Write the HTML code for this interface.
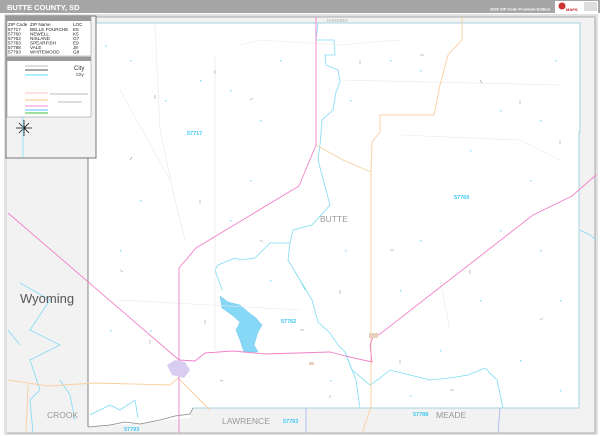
<!DOCTYPE html>
<html><head><meta charset="utf-8"><style>
html,body{margin:0;padding:0;width:600px;height:436px;overflow:hidden;background:#fff;font-family:"Liberation Sans",sans-serif}
svg{display:block}
</style></head><body>
<svg width="600" height="436" viewBox="0 0 600 436" xmlns="http://www.w3.org/2000/svg" font-family="Liberation Sans, sans-serif">
<rect width="600" height="436" fill="#fff"/>
<rect x="0" y="0" width="600" height="13" fill="#a6a6a6"/>
<text x="7" y="10" font-size="7.5" font-weight="bold" fill="#fff">BUTTE COUNTY, SD</text>
<text x="490" y="10.5" font-size="4" fill="#fff" font-weight="bold">2020 ZIP Code Premium Edition</text>
<rect x="555" y="1" width="43" height="12" fill="#fff"/>
<circle cx="562" cy="6" r="3.5" fill="#c33"/>
<text x="566" y="11" font-size="4" fill="#c22" font-weight="bold">MAPS</text>
<rect x="584" y="2" width="13" height="9" fill="#ddd"/>
<rect x="4" y="14" width="594" height="421" fill="#e2e2e2"/>
<rect x="7" y="17" width="588" height="416" fill="#f2f2f2"/>
<line x1="7" y1="17" x2="595" y2="17" stroke="#999" stroke-width="0.8"/>
<line x1="7" y1="433" x2="595" y2="433" stroke="#999" stroke-width="0.8"/>
<line x1="595" y1="17" x2="595" y2="433" stroke="#999" stroke-width="0.8"/>
<path d="M88 23 L580 23 L580 132 L579 132 L579 408 L193 408 L190 418 L170 420 L140 424 L110 425 L88 427 Z" fill="#fff"/>
<path d="M88 23 L88 427" stroke="#666" stroke-width="0.8" fill="none"/>
<path d="M88 23 L580 23 L580 132 L579 132 L579 408 L193 408" stroke="#8cc8d8" stroke-width="0.8" fill="none"/>
<path d="M88 427 L110 425 L125 422 L140 424 L160 420 L175 416 L190 414 L193 408" stroke="#888" stroke-width="0.8" fill="none"/>
<line x1="500" y1="408" x2="498" y2="433" stroke="#9ae" stroke-width="0.7"/>
<line x1="306" y1="408" x2="306" y2="433" stroke="#9ae" stroke-width="0.7"/>
<g stroke="#7fdcf4" stroke-width="0.8" fill="none">
<path d="M318 23 L316 40 L334 40 L335 55 L325 55 L326 65 L338 70 L340 82 L336 92 L333 110 L322 120 L320 145 L318 160 L330 205 L312 225 L293 230 L290 243 L270 243 L255 258 L240 260 L235 258 L218 265 L215 270 L222 290"/>
<path d="M290 243 L288 260 L300 280 L305 290"/>
<path d="M300 280 L312 300 L318 322 L330 333 L338 345 L345 352 L356 380 L360 408"/>
<path d="M345 352 L352 370 L370 385 L380 378 L390 370 L410 375 L430 380 L450 378 L468 375 L485 368 L497 380 L503 408"/>
<path d="M20 283 L50 300 L30 330 L60 345 L30 360 L40 390 L30 400 L33 433"/>
<path d="M580 230 L590 235 L596 240"/>
<path d="M90 415 L110 405 L120 410 L135 400 L138 418"/>
<path d="M60 380 L70 395 L75 420"/>
<path d="M8 330 L20 345"/>
</g>
<path d="M220 296 L228 302 L240 305 L248 312 L256 318 L262 325 L258 332 L254 345 L258 352 L244 352 L240 340 L236 330 L240 322 L232 315 L222 308 Z" fill="#86d8f6" stroke="#6cc8ee" stroke-width="0.5"/>
<g stroke="#e8e8e8" stroke-width="0.6" fill="none">
<path d="M155 25 L160 130 L175 200 L185 240"/><path d="M215 55 L215 350"/><path d="M240 45 L260 40 L340 45 L400 40"/><path d="M120 90 L170 180"/><path d="M400 135 L520 140 L560 160"/><path d="M440 280 L450 330"/><path d="M120 300 L300 310"/><path d="M340 80 L560 85"/>
</g>
<g stroke="#f8cfa0" stroke-width="0.9" fill="none">
<path d="M462 17 L462 40 L448 55 L440 85 L434 115 L380 115 L380 132 L372 142 L371 172 L371 407 L362 433"/>
<path d="M316 145 L343 160 L371 172"/>
<path d="M8 380 L48 386 L95 383 L170 385 L178 378 L192 392 L210 410"/>
<path d="M28 385 L26 432"/>
</g>
<g stroke="#f080c8" stroke-width="0.9" fill="none">
<path d="M316 17 L316 145 L299 186 L196 248 L179 268 L179 433"/>
<path d="M8 213 L179 360"/>
<path d="M179 360 L195 361 L205 353 L233 351 L265 354 L330 352 L345 356 L372 362 L370 345 L373 337 L380 334 L533 215 L572 196 L596 175"/>
</g>
<path d="M167 365 L175 360 L185 362 L190 370 L184 378 L172 375 Z" fill="#d8ccf0"/>
<rect x="369" y="333" width="9" height="5" fill="#e8d0c0"/>
<rect x="309" y="362" width="5" height="3" fill="#e8d0c0"/>
<g fill="#8fe0f8">
<rect x="130" y="60" width="1.5" height="1.5"/><rect x="200" y="80" width="1.5" height="1.5"/><rect x="260" y="120" width="1.5" height="1.5"/><rect x="420" y="70" width="1.5" height="1.5"/><rect x="500" y="110" width="1.5" height="1.5"/><rect x="540" y="250" width="1.5" height="1.5"/><rect x="480" y="300" width="1.5" height="1.5"/><rect x="140" y="200" width="1.5" height="1.5"/><rect x="250" y="180" width="1.5" height="1.5"/><rect x="420" y="240" width="1.5" height="1.5"/><rect x="520" y="360" width="1.5" height="1.5"/><rect x="110" y="330" width="1.5" height="1.5"/><rect x="390" y="60" width="1.5" height="1.5"/><rect x="555" y="60" width="1.5" height="1.5"/>
<rect x="105" y="45" width="1.5" height="1.5"/><rect x="165" y="100" width="1.5" height="1.5"/><rect x="230" y="90" width="1.5" height="1.5"/><rect x="280" y="60" width="1.5" height="1.5"/><rect x="350" y="100" width="1.5" height="1.5"/><rect x="470" y="150" width="1.5" height="1.5"/><rect x="530" y="180" width="1.5" height="1.5"/><rect x="560" y="300" width="1.5" height="1.5"/><rect x="400" y="290" width="1.5" height="1.5"/><rect x="440" y="350" width="1.5" height="1.5"/><rect x="120" y="250" width="1.5" height="1.5"/><rect x="230" y="220" width="1.5" height="1.5"/><rect x="270" y="280" width="1.5" height="1.5"/><rect x="345" y="250" width="1.5" height="1.5"/><rect x="500" y="230" width="1.5" height="1.5"/><rect x="150" y="330" width="1.5" height="1.5"/><rect x="330" y="380" width="1.5" height="1.5"/><rect x="410" y="395" width="1.5" height="1.5"/><rect x="560" y="390" width="1.5" height="1.5"/><rect x="540" y="120" width="1.5" height="1.5"/>
</g>
<g stroke="#aaa" stroke-width="0.7">
<path d="M155 95 l0 4 M215 70 l0 4 M250 100 l3 -2 M360 60 l0 4 M420 55 l4 0 M480 80 l2 3 M520 100 l0 4 M130 160 l2 -3 M200 200 l0 4 M260 240 l3 2 M340 290 l0 4 M390 250 l4 0 M470 270 l0 4 M540 320 l3 -2 M120 270 l3 2 M150 340 l0 4 M205 320 l0 4 M300 330 l4 0 M400 360 l0 4 M450 390 l4 0 M330 395 l0 3 M220 380 l3 1 M560 140 l0 4"/>
</g>
<text x="20" y="303" font-size="13" fill="#555">Wyoming</text>
<text x="47" y="418" font-size="8.5" fill="#999">CROOK</text>
<text x="222" y="424" font-size="8.5" fill="#999">LAWRENCE</text>
<text x="436" y="418" font-size="8.5" fill="#999">MEADE</text>
<text x="320" y="222" font-size="8.5" fill="#999">BUTTE</text>
<text x="327" y="22" font-size="4.5" fill="#aaa">HARDING</text>
<g font-size="5.5" fill="#3cc8f0" font-weight="bold">
<text x="187" y="135">57717</text><text x="454" y="199">57760</text><text x="281" y="323">57762</text><text x="124" y="431">57793</text><text x="283" y="423">57793</text><text x="413" y="416">57788</text>
</g>
<rect x="6" y="16" width="90" height="142" fill="#f2f2f2" stroke="#555" stroke-width="0.8"/>
<rect x="7" y="17" width="84" height="39" fill="#fff" stroke="#888" stroke-width="0.5"/>
<rect x="7" y="17" width="84" height="4" fill="#999"/>
<g font-size="4.6" fill="#222">
<text x="8" y="26">ZIP Code</text><text x="30" y="26">ZIP Name</text><text x="73" y="26">LOC</text>
<text x="8" y="31">57717</text><text x="30" y="31">BELLE FOURCHE</text><text x="73" y="31">E5</text>
<text x="8" y="35.5">57760</text><text x="30" y="35.5">NEWELL</text><text x="73" y="35.5">K5</text>
<text x="8" y="40">57762</text><text x="30" y="40">NISLAND</text><text x="73" y="40">G7</text>
<text x="8" y="44.5">57783</text><text x="30" y="44.5">SPEARFISH</text><text x="73" y="44.5">E9</text>
<text x="8" y="49">57788</text><text x="30" y="49">VALE</text><text x="73" y="49">J8</text>
<text x="8" y="53.5">57793</text><text x="30" y="53.5">WHITEWOOD</text><text x="73" y="53.5">G8</text>
</g>
<rect x="7" y="57" width="84" height="60" fill="#fff" stroke="#888" stroke-width="0.5"/>
<rect x="7" y="57" width="84" height="4" fill="#999"/>
<g stroke-width="1.2">
<line x1="25" y1="66" x2="48" y2="66" stroke="#ccc"/><line x1="25" y1="70" x2="48" y2="70" stroke="#777"/><line x1="25" y1="75" x2="48" y2="75" stroke="#aeeeff" stroke-width="2"/>
<line x1="25" y1="106" x2="48" y2="106" stroke="#f8a8e0"/><line x1="25" y1="110" x2="48" y2="110" stroke="#7cf"/><line x1="25" y1="113" x2="48" y2="113" stroke="#6c6"/>
<line x1="25" y1="93" x2="48" y2="93" stroke="#fcc"/><line x1="25" y1="100" x2="48" y2="100" stroke="#fc9"/>
</g>
<text x="74" y="70" font-size="6" fill="#333">City</text>
<text x="76" y="76" font-size="4.5" fill="#333">City</text>
<path d="M50 94 L88 94 M58 102 L82 102" stroke="#777" stroke-width="0.5"/>
<g stroke="#111" stroke-width="0.8">
<path d="M24 120 L24 136 M16 128 L32 128 M19 123 L29 133 M29 123 L19 133"/>
</g>
<circle cx="24" cy="128" r="1.5" fill="#111"/>
<line x1="23" y1="117" x2="23" y2="158" stroke="#7fdcf4" stroke-width="0.8"/>
</svg>
</body></html>
